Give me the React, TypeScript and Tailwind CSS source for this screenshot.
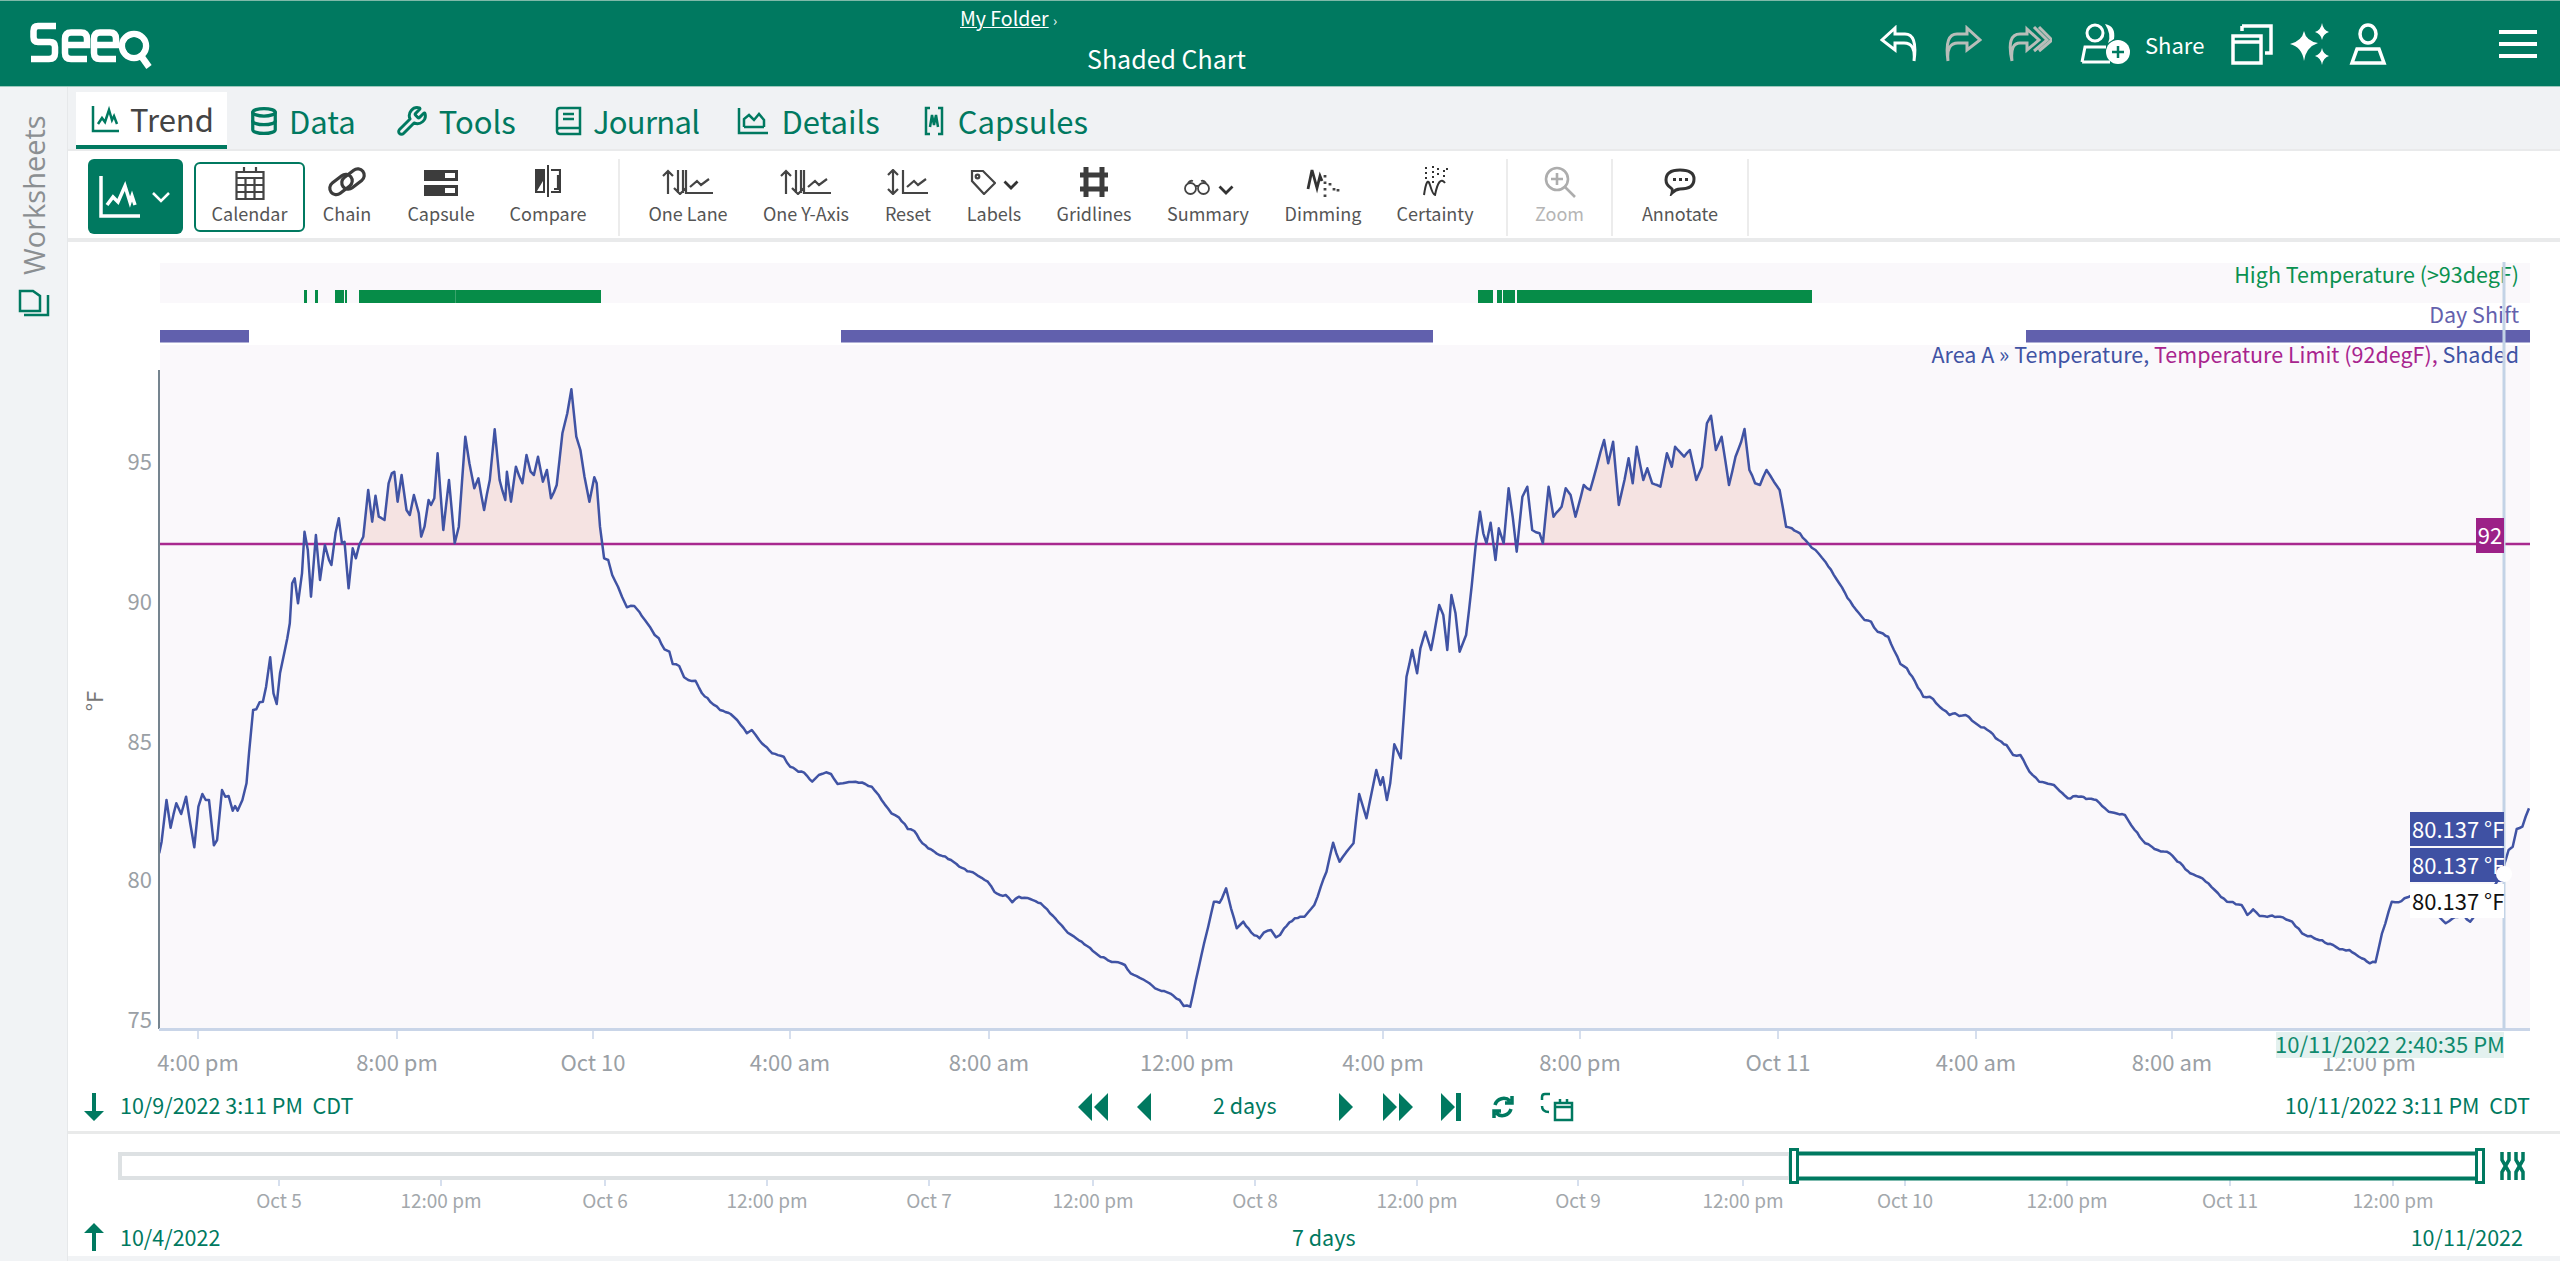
import type { ReactNode } from 'react';
import { Database, Wrench } from 'lucide-react';

const font = '[font-family:"Noto_Sans_CJK_SC","Liberation_Sans",sans-serif]';

// traced curve, [x, y] in crop coords; each group has its own page offset
const traceA = [[195,610],[198,575],[204,450],[209,533],[216,460],[222,492],[228,440],[233,520],[238,592],[243,470],[248,432],[252,450],[256,450],[262,586],[266,570],[272,420],[276,440],[280,438],[285,482],[288,468],[291,482],[297,450],[302,400],[305,310],[310,180],[314,178],[318,157],[322,155],[326,110],[331,22],[335,130],[339,162],[343,70],[349,0]];
const traceB = [[352,1165],[355,1120],[358,1000],[361,985],[365,1060],[370,970],[373,845],[377,900],[381,1040],[387,855],[392,990],[398,885],[403,930],[406,945],[411,850],[415,805],[419,880],[422,875],[427,1015],[432,895],[436,925],[440,885],[445,860],[451,720],[456,815],[460,737],[464,800],[471,810],[476,700],[480,670],[483,665],[487,755],[492,675],[498,780],[502,795],[507,735],[513,790],[516,860],[520,830],[525,750],[528,765],[532,745],[536,610],[543,840],[550,690],[557,880],[562,830],[570,560],[575,640],[581,715],[586,685],[593,780],[600,690],[606,538],[612,690],[619,750],[621,665],[626,755],[632,650],[640,700],[645,615],[650,665],[654,675],[659,620],[665,695],[670,660],[675,745],[682,705],[689,550],[695,490],[700,418],[706,560],[711,600],[716,680],[722,755],[728,682],[731,700],[735,830],[738,885],[740,925],[745,930],[750,975],[757,1010],[762,1040],[768,1072],[777,1068],[783,1085],[790,1110],[796,1130],[802,1155],[807,1165],[814,1198]];
const traceC = [[820,5],[824,42],[832,48],[838,82],[843,90],[852,92],[860,130],[870,155],[882,180],[895,192],[903,210],[915,250],[921,240],[930,270],[946,310],[960,320],[968,350],[978,365],[985,368],[995,395],[1003,375],[1012,367],[1018,372],[1026,402],[1036,398],[1048,395],[1060,402],[1068,410],[1080,450],[1092,490],[1101,502],[1112,537],[1120,543],[1130,580],[1147,610],[1165,630],[1175,650],[1195,672],[1210,695],[1218,725],[1225,735],[1232,735],[1240,757],[1248,740],[1262,747],[1275,760],[1290,798],[1308,848],[1325,875],[1345,915],[1358,932],[1370,937],[1378,945],[1385,970],[1400,988],[1408,1000],[1415,1015],[1430,1027],[1445,1050],[1450,1068],[1458,1070],[1465,990],[1475,880],[1480,830],[1487,755],[1494,758],[1497,745],[1502,715],[1508,775],[1515,835],[1523,815],[1533,848],[1543,865],[1548,848],[1557,840],[1563,862]];
const traceD = [[0,855],[5,835],[18,805],[25,800],[30,800],[42,765],[50,710],[57,665],[65,578],[73,635],[85,595],[90,580],[97,432],[106,505],[110,455],[118,360],[123,405],[126,382],[131,450],[135,400],[140,283],[148,325],[155,80],[162,0],[168,70]];
const traceE = [[172,1195],[178,1145],[185,1200],[195,1065],[200,1095],[205,1200],[210,1035],[215,1090],[220,1205],[228,1155],[235,1005],[240,880],[245,785],[249,850],[253,880],[258,818],[264,930],[268,835],[274,880],[280,715],[285,800],[290,905],[297,740],[303,710],[309,840],[318,850],[322,880],[329,710],[335,800],[345,770],[350,715],[356,735],[362,800],[372,705],[380,720],[388,650],[397,570],[402,640],[408,575],[415,765],[422,690],[427,625],[432,700],[437,590],[445,690],[450,655],[456,700],[466,710],[474,610],[480,650],[484,590],[495,620],[502,600],[510,690],[517,650],[523,520],[528,497],[534,600],[541,560],[550,705],[558,620],[565,575],[569,537],[575,660],[582,700],[588,705],[596,660],[605,695],[612,720],[620,830],[627,835],[637,850],[647,880],[656,900],[668,935],[685,1000],[702,1068],[716,1110],[724,1115],[732,1145],[745,1160],[752,1200]];
const traceF = [[760,42],[768,55],[778,95],[788,140],[796,140],[808,170],[820,195],[827,190],[832,198],[840,195],[855,225],[870,245],[880,270],[890,285],[898,315],[907,315],[918,365],[930,395],[948,405],[965,445],[975,438],[1000,450],[1015,485],[1035,495],[1047,540],[1060,580],[1075,600],[1090,610],[1115,670],[1130,685],[1145,720],[1160,755],[1178,765],[1185,795],[1192,778],[1200,798],[1225,800],[1240,815],[1252,850],[1270,868],[1290,885],[1298,898],[1310,900],[1325,925],[1335,940],[1342,937],[1350,850],[1362,755],[1370,757],[1385,738],[1400,745],[1415,790],[1428,820],[1440,800],[1450,795],[1458,815],[1465,795],[1480,740],[1495,680],[1505,600],[1510,590],[1515,537],[1522,530],[1530,475]];

const place = (pts: number[][], ox: number, oy: number) =>
  pts.map(([x, y]) => [ox + x / 1.225, oy + y / 3]);

const curve = [
  ...place(traceA, 0, 650),
  ...place(traceB, 0, 250),
  ...place(traceC, 0, 650),
  ...place(traceD, 1280, 650),
  ...place(traceE, 1280, 250),
  ...place(traceF, 1280, 650),
];

// the real signal has small stairs on its slow stretches, the trace is too coarse for that
const roughen = (pts: number[][]) => {
  const out: string[] = [];
  pts.forEach(([x, y], i) => {
    out.push(`${x.toFixed(1)},${y.toFixed(1)}`);
    const next = pts[i + 1];
    if (!next || next[0] - x < 5) return;
    const steps = Math.floor((next[0] - x) / 2.5);
    for (let s = 1; s < steps; s++) {
      const t = s / steps;
      const wob = (Math.sin(x * 2.3 + s * 2.1) + Math.sin(x * 0.7 + s * 4.9)) * 0.55 * Math.sin(t * Math.PI);
      out.push(`${(x + (next[0] - x) * t).toFixed(1)},${(y + (next[1] - y) * t + wob).toFixed(1)}`);
    }
  });
  return out;
};
const line = roughen(curve);

const LIMIT_Y = 544;
const shadePath = `M159,${LIMIT_Y} L${curve.map(([x, y]) => `${x.toFixed(1)},${y.toFixed(1)}`).join(' L')} L2530,${LIMIT_Y} Z`;

const mainTicks = [
  [198, '4:00 pm'], [397, '8:00 pm'], [593, 'Oct 10'], [790, '4:00 am'], [989, '8:00 am'], [1187, '12:00 pm'],
  [1383, '4:00 pm'], [1580, '8:00 pm'], [1778, 'Oct 11'], [1976, '4:00 am'], [2172, '8:00 am'], [2369, '12:00 pm'],
] as const;
const brushTicks = [
  [279, 'Oct 5'], [441, '12:00 pm'], [605, 'Oct 6'], [767, '12:00 pm'], [929, 'Oct 7'], [1093, '12:00 pm'], [1255, 'Oct 8'],
  [1417, '12:00 pm'], [1578, 'Oct 9'], [1743, '12:00 pm'], [1905, 'Oct 10'], [2067, '12:00 pm'], [2230, 'Oct 11'], [2393, '12:00 pm'],
] as const;
const yTicks = [[462, '95'], [602, '90'], [742, '85'], [880, '80'], [1020, '75']] as const;

const Logo = () => (
  <svg width="124" height="50" viewBox="28 18 124 50" fill="none" stroke="white" strokeWidth="6.5" className="ml-[28px]">
    <path d="M56 25H38Q33.500 25 33.500 30V36Q33.500 41 38 41H50Q55 41 55 46V52Q55 58 49 58H31" />
    <path d="M64 44H87V38Q87 31.500 81 31.500H71Q65 31.500 65 38V52Q65 58 71 58H87" />
    <path d="M93 44H116V38Q116 31.500 110 31.500H100Q94 31.500 94 38V52Q94 58 100 58H116" />
    <circle cx="134" cy="45" r="12" />
    <path d="M139 52L149 66" />
    <circle cx="134" cy="45" r="8" stroke="#007960" strokeWidth="1.500" />
  </svg>
);

const TabIcon = ({ d, w = 30 }: { d: string; w?: number }) => (
  <svg width={w} height="30" viewBox={`0 0 ${w} 30`} fill="none" stroke="currentColor" strokeWidth="2.5">
    <path d={d} />
  </svg>
);

const Tabs = () => (
  <div className={`flex h-[62px] bg-[#f0f2f4] pl-[8px] text-[31px] leading-[40px] text-[#007960] ${font}`}>
    <div className="mt-[5px] flex h-[57px] w-[151px] items-center gap-[9px] border-b-[4px] border-[#007960] bg-white pl-[15px] text-[#444]">
      <span className="text-[#007960]"><TabIcon d="M2 2V27H28M7 20L11 14L14 18L18 6L21 16L23 12L26 20" /></span>
      <span>Trend</span>
    </div>
    <div className="ml-[22px] flex h-[62px] items-center gap-[10px] pt-[5px]">
      <Database size={30} strokeWidth={2.6} />
      <span>Data</span>
    </div>
    <div className="ml-[40px] flex h-[62px] items-center gap-[11px] pt-[5px]">
      <Wrench size={32} strokeWidth={2.2} />
      <span>Tools</span>
    </div>
    <div className="ml-[37px] flex h-[62px] items-center gap-[10px] pt-[5px]">
      <TabIcon d="M4 25V5Q4 2 7 2H27V28H7Q4 28 4 25ZM4 24Q4 22 7 22H27M10 8H21M10 13H21" />
      <span className="tracking-[-0.7px]">Journal</span>
    </div>
    <div className="ml-[38px] flex h-[62px] items-center gap-[12px] pt-[5px]">
      <TabIcon w={32} d="M2 2V27H31M7 21H27M7 21V13L12 9L17 14L22 8L27 14V21" />
      <span>Details</span>
    </div>
    <div className="ml-[44px] flex h-[62px] items-center gap-[14px] pt-[5px]">
      <TabIcon w={20} d="M6 2H2V28H6M14 2H18V28H14M6 21L8 9L10 19L12 9L14 21" />
      <span>Capsules</span>
    </div>
  </div>
);

const stroke = { fill: 'none', stroke: '#444', strokeWidth: 2.2 };

const CalendarIcon = () => (
  <svg width="30" height="34" viewBox="0 0 30 34" {...stroke}>
    <path d="M1.500 6H28.500V33H1.500ZM1.500 12H28.500M1.500 19H28.500M1.500 26H28.500M10.500 12V33M19.500 12V33M9 1V7M21 1V7" />
  </svg>
);
const ChainIcon = () => (
  <svg width="40" height="32" viewBox="0 0 40 32" fill="none" stroke="#3c3c3c" strokeWidth="3.200">
    <rect x="1.500" y="12" width="25" height="13" rx="6.500" transform="rotate(-38 14 18.500)" />
    <rect x="13.500" y="6.500" width="25" height="13" rx="6.500" transform="rotate(-38 26 13)" />
  </svg>
);
const CapsuleIcon = () => (
  <svg width="34" height="26" viewBox="0 0 34 26">
    <path fill="#3c3c3c" d="M0 0H34V11H0ZM0 15H34V26H0Z" />
    <path fill="white" d="M21 3H31V8H21ZM21 18H31V23H21Z" />
  </svg>
);
const CompareIcon = () => (
  <svg width="26" height="32" viewBox="0 0 26 32">
    <path fill="#3c3c3c" d="M0 4H10V28H0ZM12 0H14V32H12Z" />
    <path fill="white" d="M8 16V26H2Z" />
    <path fill="none" stroke="#3c3c3c" strokeWidth="2.2" d="M16 5H25V27H16M19 24H23V10" />
  </svg>
);
const ArrowsLane = () => (
  <svg width="52" height="26" viewBox="0 0 52 26" {...stroke}>
    <path d="M6 25V2M1 7L6 2L11 7M16 1V24M21 1V24M12 19L18 25L24 19M24 1V24H51M28 18L35 12L39 16L47 10" />
  </svg>
);
const ResetIcon = () => (
  <svg width="42" height="26" viewBox="0 0 42 26" {...stroke}>
    <path d="M6 1V25M1 6L6 1L11 6M1 20L6 25L11 20M16 1V24H41M20 18L27 12L31 16L39 10" />
  </svg>
);
const Chevron = () => (
  <svg width="16" height="10" viewBox="0 0 16 10" fill="none" stroke="#333" strokeWidth="2.8">
    <path d="M1.500 1.500L8 8L14.500 1.500" />
  </svg>
);
const LabelsIcon = () => (
  <div className="flex items-center gap-[7px]">
    <svg width="26" height="26" viewBox="0 0 26 26" {...stroke}>
      <path d="M2 2H13L25 14L14 25L2 12Z" />
      <circle cx="7.500" cy="7.500" r="1.800" />
    </svg>
    <span className="mt-[6px]"><Chevron /></span>
  </div>
);
const GridIcon = () => (
  <svg width="28" height="30" viewBox="0 0 28 30" fill="none" stroke="#3c3c3c" strokeWidth="5">
    <path d="M6 0V30M22 0V30M0 8H28M0 22H28" />
  </svg>
);
const SummaryIcon = () => (
  <div className="flex items-center gap-[7px]">
    <svg width="28" height="16" viewBox="0 0 28 16" {...stroke} strokeWidth="1.800">
      <circle cx="7.500" cy="9.500" r="5.500" />
      <circle cx="20.500" cy="9.500" r="5.500" />
      <path d="M5 4Q7 1 10 2M18 2Q21 1 23 4M12 7H16" />
    </svg>
    <span className="mt-[6px]"><Chevron /></span>
  </div>
);
const DimmingIcon = () => (
  <svg width="34" height="30" viewBox="0 0 34 30" fill="none" stroke="#333" strokeWidth="2.8">
    <path d="M2 22L6 3L11 21L14 9L16 14" />
    <path stroke="#444" strokeDasharray="2.500 4" d="M19 8V30M24 16V22M28 21V27M32 22V25" />
  </svg>
);
const CertaintyIcon = () => (
  <svg width="28" height="34" viewBox="0 0 28 34" fill="none" stroke="#333" strokeWidth="2">
    <path d="M3 30Q6 10 9 20T14 30Q18 10 24 18" />
    <path strokeDasharray="2 3" d="M5 14V2M12 18V0M17 10V3M23 12V2M26 5V1" />
  </svg>
);
const ZoomIcon = () => (
  <svg width="34" height="32" viewBox="0 0 34 32" fill="none" stroke="#adadad" strokeWidth="2.6">
    <circle cx="14" cy="13" r="11" />
    <path d="M14 7V19M8 13H20M22 21L32 31" />
  </svg>
);
const AnnotateIcon = () => (
  <svg width="32" height="28" viewBox="0 0 32 28" fill="none" stroke="#333" strokeWidth="3">
    <path d="M8 25Q9 21 7 20Q2 17 2 12Q2 2 16 2Q30 2 30 11Q30 21 16 21Q12 21 8 25Z" />
    <path stroke="#333" strokeWidth="3" strokeDasharray="3 3" d="M9 11.500H24" />
  </svg>
);

const ToolBtn = ({ w, label, icon, muted }: { w: string; label: string; icon: ReactNode; muted?: boolean }) => (
  <div className={`flex shrink-0 flex-col items-center ${w}`}>
    <div className="flex h-[41px] items-end">{icon}</div>
    <span className={`mt-[1px] text-[18px] leading-[24px] ${muted ? 'text-[#b5b5b5]' : 'text-[#555]'}`}>{label}</span>
  </div>
);
const Sep = ({ ml = '' }: { ml?: string }) => <div className={`h-[77px] w-[2px] shrink-0 bg-[#ececec] ${ml}`} />;

const Toolbar = () => (
  <div className={`flex h-[89px] items-start border-t-[2px] border-[#e9eaeb] bg-white pl-[20px] pt-[8px] ${font}`}>
    <div className="flex h-[75px] w-[95px] shrink-0 items-center gap-[10px] rounded-[6px] bg-[#007960] pl-[11px]">
      <svg width="42" height="42" viewBox="0 0 42 42" fill="none" stroke="white" strokeWidth="3.500">
        <path d="M2 0V40H41M8 29L14 21L19 26L26 10L31 26L33 20L36 29" />
      </svg>
      <svg width="20" height="12" viewBox="0 0 20 12" fill="none" stroke="white" strokeWidth="2.5">
        <path d="M2 2L10 10L18 2" />
      </svg>
    </div>
    <div className="ml-[11px] mt-[3px] flex h-[70px] w-[111px] shrink-0 flex-col items-center rounded-[6px] border-[2px] border-[#007960]">
      <div className="flex h-[36px] items-end"><CalendarIcon /></div>
      <span className="mt-[1px] text-[18px] leading-[24px] text-[#555]">Calendar</span>
    </div>
    <ToolBtn w="w-[84px]" label="Chain" icon={<span className="mb-[2px]"><ChainIcon /></span>} />
    <ToolBtn w="w-[104px]" label="Capsule" icon={<span className="mb-[4px]"><CapsuleIcon /></span>} />
    <ToolBtn w="w-[110px]" label="Compare" icon={<span className="mb-[3px]"><CompareIcon /></span>} />
    <Sep ml="ml-[15px]" />
    <ToolBtn w="w-[136px]" label="One Lane" icon={<span className="mb-[5px]"><ArrowsLane /></span>} />
    <ToolBtn w="w-[100px]" label="One Y-Axis" icon={<span className="mb-[5px]"><ArrowsLane /></span>} />
    <ToolBtn w="w-[104px]" label="Reset" icon={<span className="mb-[5px]"><ResetIcon /></span>} />
    <ToolBtn w="w-[68px]" label="Labels" icon={<span className="mb-[5px]"><LabelsIcon /></span>} />
    <ToolBtn w="w-[132px]" label="Gridlines" icon={<span className="mb-[3px]"><GridIcon /></span>} />
    <ToolBtn w="w-[96px]" label="Summary" icon={<span className="mb-[5px]"><SummaryIcon /></span>} />
    <ToolBtn w="w-[134px]" label="Dimming" icon={<span className="mb-[3px]"><DimmingIcon /></span>} />
    <ToolBtn w="w-[90px]" label="Certainty" icon={<span className="mb-[1px]"><CertaintyIcon /></span>} />
    <Sep ml="ml-[26px]" />
    <ToolBtn w="w-[103px]" label="Zoom" muted icon={<span className="mb-[2px]"><ZoomIcon /></span>} />
    <Sep />
    <ToolBtn w="w-[134px]" label="Annotate" icon={<span className="mb-[4px]"><AnnotateIcon /></span>} />
    <Sep />
  </div>
);

const ValueLabel = ({ y, dark }: { y: number; dark: boolean }) => (
  <g>
    <rect x="2410" y={y} width="94" height="34" fill={dark ? '#3f51a3' : 'white'} />
    <text x="2412" y={y + 26} fontSize="22" fill={dark ? 'white' : '#111'}>80.137 °F</text>
  </g>
);

const Chart = () => (
  <svg width="2492" height="843" viewBox="68 242 2492 843" className={`block shrink-0 ${font}`}>
    <defs>
      <clipPath id="shadeClip">
        <rect x="363" y="370" width="238" height={LIMIT_Y - 370} />
        <rect x="1543" y="370" width="263" height={LIMIT_Y - 370} />
      </clipPath>
      <clipPath id="plotClip">
        <rect x="159" y="345" width="2371" height="700" />
      </clipPath>
    </defs>

    <rect x="160" y="263" width="2370" height="40" fill="#faf8fb" />
    <rect x="160" y="345" width="2370" height="684" fill="#faf8fb" />

    {[[304, 3], [315, 3], [335, 9], [345, 2], [359, 242], [1478, 15], [1497, 5], [1503, 12], [1517, 295]].map(([x, w]) => (
      <rect key={x} x={x} y="290" width={w} height="13" fill="#068c48" />
    ))}
    <rect x="455" y="290" width="1" height="13" fill="#3aa36c" />
    {[[160, 89], [841, 592], [2026, 504]].map(([x, w]) => (
      <rect key={x} x={x} y="330" width={w} height="12.500" fill="#6160ad" />
    ))}

    <text x="2519" y="283" textAnchor="end" fontSize="21.500" fill="#0a9150">High Temperature (&gt;93degF)</text>
    <text x="2519" y="323" textAnchor="end" fontSize="21.500" fill="#6461ad">Day Shift</text>
    <text x="2519" y="363" textAnchor="end" fontSize="21.500" fill="#4053a4">
      Area A » Temperature, <tspan fill="#a8248e">Temperature Limit (92degF), </tspan>Shaded
    </text>

    <path d={shadePath} fill="#f5e3e2" clipPath="url(#shadeClip)" />
    <line x1="160" x2="2530" y1={LIMIT_Y} y2={LIMIT_Y} stroke="#a8298f" strokeWidth="2.500" />
    <polyline points={line.join(' ')} fill="none" stroke="#4053a4" strokeWidth="2.500" strokeLinejoin="round" clipPath="url(#plotClip)" />

    <line x1="159" x2="159" y1="370" y2="1029" stroke="#75848f" strokeWidth="2" />
    <line x1="159" x2="2530" y1="1029.500" y2="1029.500" stroke="#c9d5e8" strokeWidth="3" />
    {mainTicks.map(([x]) => (
      <line key={x} x1={x} x2={x} y1="1029" y2="1039" stroke="#c9d5e8" strokeWidth="1.500" />
    ))}
    {yTicks.map(([y, t]) => (
      <text key={t} x="152" y={y + 8} textAnchor="end" fontSize="22" fill="#9aa0a5">{t}</text>
    ))}
    <text transform="translate(103 701) rotate(-90)" textAnchor="middle" fontSize="22" fill="#777">°F</text>
    {mainTicks.map(([x, t]) => (
      <text key={x} x={x} y="1071" textAnchor="middle" fontSize="22" fill="#9aa0a5">{t}</text>
    ))}

    <line x1="2504" x2="2504" y1="262" y2="1029" stroke="#c3d3e6" strokeWidth="3" />
    <rect x="2476" y="518" width="28" height="35" fill="#9c2187" />
    <text x="2490" y="544" textAnchor="middle" fontSize="22" fill="white">92</text>
    <ValueLabel y={812} dark />
    <ValueLabel y={848} dark />
    <ValueLabel y={884} dark={false} />
    <circle cx="2504" cy="874" r="8" fill="white" />
    <rect x="2276" y="1032" width="228" height="26" fill="#e3f1ef" />
    <text x="2390" y="1053" textAnchor="middle" fontSize="22" fill="#0f8a6e">10/11/2022 2:40:35 PM</text>
  </svg>
);

const Glyph = ({ w, d }: { w: number; d: string }) => (
  <svg width={w} height="28" viewBox={`0 0 ${w} 28`} fill="#007960">
    <path d={d} />
  </svg>
);

const NavRow = () => (
  <div className={`flex h-[46px] items-center pb-[2px] text-[21.5px] leading-[28px] text-[#007960] ${font}`}>
    <div className="ml-[16px]"><Glyph w={20} d="M8 0H12V18H20L10 28L0 18H8Z" /></div>
    <span className="ml-[16px] mb-[4px] w-[956px] whitespace-pre">10/9/2022 3:11 PM  CDT</span>
    <Glyph w={32} d="M16 0V28L2 14ZM32 0V28L18 14Z" />
    <div className="ml-[29px]"><Glyph w={14} d="M14 0V28L0 14Z" /></div>
    <span className="ml-[62px] mb-[4px]">2 days</span>
    <div className="ml-[63px]"><Glyph w={14} d="M0 0V28L14 14Z" /></div>
    <div className="ml-[30px]"><Glyph w={30} d="M0 0V28L14 14ZM16 0V28L30 14Z" /></div>
    <div className="ml-[28px]"><Glyph w={20} d="M0 0V28L14 14ZM15 0H20V28H15Z" /></div>
    <svg width="24" height="24" viewBox="0 0 24 24" fill="none" stroke="#007960" strokeWidth="3.500" className="ml-[30px]">
      <path d="M4 10A9 9 0 0 1 19 6M20 14A9 9 0 0 1 5 18M21 1V8H14M3 23V16H10" />
    </svg>
    <svg width="34" height="30" viewBox="0 0 34 30" fill="none" stroke="#007960" strokeWidth="2.500" className="ml-[25px]">
      <path d="M15 11H32V28H15ZM15 15H32M20 7V11M27 7V11" />
      <path d="M10 2H5Q2 2 2 5V8M9 20Q2 20 2 14" />
    </svg>
    <span className="ml-auto mr-[30px] mb-[4px] whitespace-pre">10/11/2022 3:11 PM  CDT</span>
  </div>
);

const Brush = () => (
  <svg width="2492" height="84" viewBox="68 1134 2492 84" className={`block shrink-0 ${font}`}>
    <rect x="120" y="1154" width="1670" height="24" fill="white" stroke="#dde1e3" strokeWidth="4" />
    {brushTicks.map(([x]) => (
      <line key={x} x1={x} x2={x} y1="1180" y2="1186" stroke="#c9d5e8" strokeWidth="1.500" />
    ))}
    {brushTicks.map(([x, t]) => (
      <text key={x} x={x} y="1208" textAnchor="middle" fontSize="19" fill="#a3a8ac">{t}</text>
    ))}
    <rect x="1792" y="1153.500" width="690" height="25" fill="white" stroke="#007960" strokeWidth="4" />
    <rect x="1790.500" y="1149.500" width="7" height="33" fill="white" stroke="#007960" strokeWidth="3" />
    <rect x="2476.500" y="1149.500" width="7" height="33" fill="white" stroke="#007960" strokeWidth="3" />
    <path fill="none" stroke="#007960" strokeWidth="3.500" d="M2502 1152V1160L2509 1172V1180M2509 1152V1160L2502 1172V1180M2516 1152V1160L2523 1172V1180M2523 1152V1160L2516 1172V1180" />
  </svg>
);

const BrushFooter = () => (
  <div className={`flex h-[38px] items-center text-[21.5px] leading-[28px] text-[#007960] ${font}`}>
    <div className="ml-[16px]"><Glyph w={20} d="M10 0L20 10H12V28H8V10H0Z" /></div>
    <span className="ml-[16px] w-[1172px]">10/4/2022</span>
    <span>7 days</span>
    <span className="ml-auto mr-[37px]">10/11/2022</span>
  </div>
);

const Header = () => (
  <div className={`flex h-[87px] shrink-0 items-center border-t border-b border-t-[#7fb9a9] border-b-[#9cc9bd] bg-[#007960] text-white ${font}`}>
    <Logo />
    <div className="ml-[808px] flex h-[85px] w-[300px] flex-col">
      <div className="mt-[4px] text-[19.5px] leading-[26px]">
        <span className="underline">My Folder</span> <span className="text-[14px]">›</span>
      </div>
      <div className="ml-[127px] mt-[9px] text-[25px] leading-[32px]">Shaded Chart</div>
    </div>
    <svg width="40" height="38" viewBox="0 0 40 38" fill="none" stroke="white" strokeWidth="3" className="ml-[620px]">
      <path d="M15 3L2 15L15 25V18H24Q36 18 34 36Q38 8 24 9H15Z" />
    </svg>
    <svg width="40" height="38" viewBox="0 0 40 38" fill="none" stroke="#b8bdb9" strokeWidth="3" className="ml-[22px]">
      <path d="M25 3L38 15L25 25V18H16Q4 18 6 36Q2 8 16 9H25Z" />
    </svg>
    <svg width="46" height="38" viewBox="0 0 46 38" fill="none" stroke="#b8bdb9" strokeWidth="3" className="ml-[24px]">
      <path d="M21 4L33 15L21 25V18H14Q4 18 6 36Q0 9 14 9H21ZM28 2L41 15L28 26M33 2L46 15L33 26" />
    </svg>
    <svg width="52" height="42" viewBox="0 0 52 42" fill="none" stroke="white" strokeWidth="3" className="ml-[28px]">
      <circle cx="15" cy="10" r="8" />
      <path d="M2 39L5 24H26M2 39H30" />
      <path fill="white" stroke="none" d="M25 1Q36 3 34 16L28 20Q32 12 25 1Z" />
      <circle cx="38" cy="29" r="12" fill="white" stroke="none" />
      <path stroke="#007960" strokeWidth="2.500" d="M38 23V35M32 29H44" />
    </svg>
    <span className="ml-[13px] text-[22px] leading-[30px]">Share</span>
    <svg width="42" height="42" viewBox="0 0 42 42" fill="none" stroke="white" strokeWidth="3.500" className="ml-[27px]">
      <path d="M2 13H30V40H2ZM2 19H30M11 3H40V30H34M11 3V8" />
    </svg>
    <svg width="42" height="42" viewBox="0 0 42 42" fill="white" className="ml-[17px]">
      <path d="M14 8Q16 18 28 20Q16 24 14 38Q12 24 0 21Q12 18 14 8ZM32 0Q33 7 39 9Q33 11 32 17Q31 11 25 9Q31 7 32 0ZM32 25Q33 31 39 33Q33 35 32 42Q31 35 25 33Q31 31 32 25Z" />
    </svg>
    <svg width="38" height="42" viewBox="0 0 38 42" fill="none" stroke="white" strokeWidth="3.500" className="ml-[17px]">
      <ellipse cx="19" cy="11" rx="8" ry="9" />
      <path d="M8 26H30L35 40H3Z" />
    </svg>
    <div className="ml-[112px] flex w-[38px] flex-col gap-[8px]">
      <div className="h-[4px] bg-white" />
      <div className="h-[4px] bg-white" />
      <div className="h-[4px] bg-white" />
    </div>
  </div>
);

const Sidebar = () => (
  <div className="flex w-[68px] shrink-0 flex-col items-center border-r border-[#e6e8ea] bg-[#f1f3f5] pt-[21px]">
    <span className='h-[167px] rotate-180 whitespace-nowrap text-[29px] leading-[36px] text-[#8b8f92] [font-family:"Open_Sans",sans-serif] [writing-mode:vertical-rl]'>Worksheets</span>
    <svg width="32" height="30" viewBox="0 0 32 30" fill="none" stroke="#007960" strokeWidth="2.500" className="mt-[12px]">
      <path d="M2 24V4H15L22 9V24ZM6 28H30V8" />
    </svg>
  </div>
);

export default function App() {
  return (
    <div className="flex h-screen flex-col overflow-hidden bg-[#f1f3f5]">
      <Header />
      <div className="flex flex-1">
        <Sidebar />
        <div className="flex h-[1169px] flex-1 flex-col bg-white">
          <Tabs />
          <Toolbar />
          <div className="h-[4px] shrink-0 bg-[#e9eaeb]" />
          <Chart />
          <NavRow />
          <div className="h-[3px] shrink-0 bg-[#e9eaea]" />
          <Brush />
          <BrushFooter />
        </div>
      </div>
    </div>
  );
}
